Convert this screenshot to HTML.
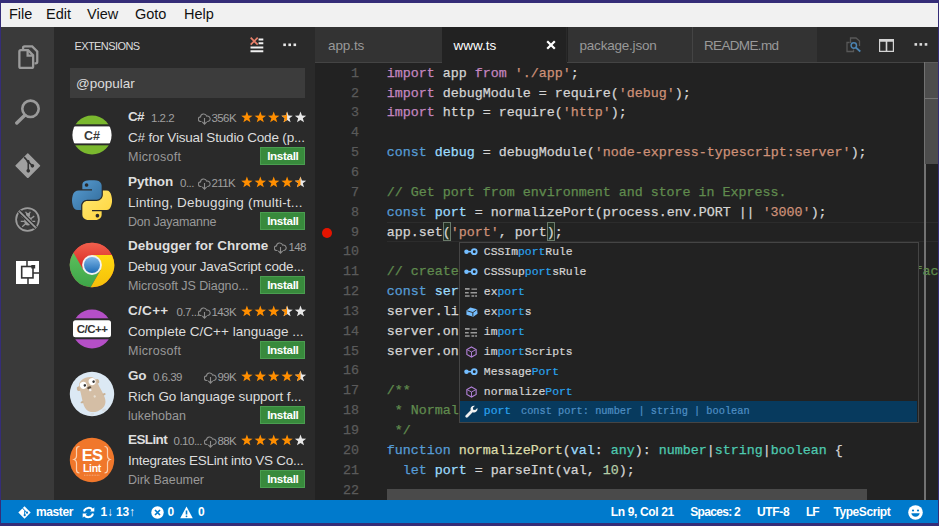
<!DOCTYPE html>
<html lang="en">
<head>
<meta charset="utf-8">
<title>www.ts - Visual Studio Code</title>
<style>
*{box-sizing:border-box;margin:0;padding:0}
html,body{width:939px;height:526px;overflow:hidden;background:#352d78}
body{position:relative;font-family:"Liberation Sans",sans-serif;color:#ccc}
.abs{position:absolute}
#menubar{left:1px;top:3px;width:937px;height:24px;background:#f1f1f1;color:#111;font-size:14.5px}
#menubar span{position:absolute;top:2.300px;line-height:18px;white-space:nowrap}
#activity{left:1px;top:27px;width:53px;height:473px;background:#3a3a3a;z-index:2}
#sidebar{left:53px;top:27px;width:262px;height:473px;background:#2a2a2a;overflow:hidden}
#editor{left:315px;top:27px;width:623px;height:473px;background:#222;overflow:hidden}
#status{left:1px;top:499.500px;width:937px;height:23.500px;background:#007acc;color:#fff;font-size:12px;font-weight:bold}
#status span{position:absolute;top:0;line-height:25px;white-space:nowrap}
/* sidebar */
#sbtitle{left:21.500px;top:11px;font-size:11px;line-height:16px;color:#ddd;letter-spacing:-0.59px}
#search{left:17px;top:41px;width:235px;height:30px;background:#3c3c3c;color:#ddd;font-size:13.5px;line-height:31.500px;padding-left:6px}
.ext{position:absolute;left:0;width:262px;height:65px}
.ext .ic{position:absolute;left:17px;top:18px;width:42px;height:42px}
.ext .t{position:absolute;left:75px;top:4px;font-size:13.5px;font-weight:bold;color:#dedede;line-height:18px;white-space:nowrap;letter-spacing:-0.5px}
.ext .v{position:absolute;top:5px;font-size:11.5px;color:#a0a0a0;line-height:18px;white-space:nowrap;letter-spacing:-0.5px}
.ext .n{position:absolute;top:5px;font-size:11.5px;color:#a0a0a0;line-height:18px;white-space:nowrap;letter-spacing:-0.6px}
.ext .d{position:absolute;left:75px;top:24px;width:178px;font-size:13.5px;color:#ddd;line-height:20px;white-space:nowrap;overflow:hidden;letter-spacing:-0.35px}
.ext .a{position:absolute;left:75px;top:44px;font-size:12.5px;color:#999;line-height:18px;white-space:nowrap}
.ext .b{position:absolute;left:207.200px;top:43.300px;width:45.300px;height:18px;background:#388a3c;border:1px solid #4a9e50;color:#fff;font-size:11.700px;line-height:16px;text-align:center;letter-spacing:-0.350px;font-weight:bold}
.stars{position:absolute;top:7px;height:13px}
/* editor */
.tab{position:absolute;top:0;height:35px;background:#333;color:#999;font-size:13.5px;line-height:37.500px;white-space:nowrap;letter-spacing:-0.4px}
.tab.act{background:#222;color:#fff}
#code{left:0;top:35px;width:623px;height:438px;font-family:"Liberation Mono",monospace;font-size:13.33px;color:#d4d4d4;-webkit-text-stroke:0.25px}
.ln{position:absolute;left:0;width:623px;height:20px;line-height:20px;white-space:pre}
.ln i{position:absolute;left:0;width:44px;text-align:right;color:#5a5a5a;font-style:normal}
.ln b{position:absolute;left:71.700px;font-weight:normal}
.k{color:#c586c0}.s{color:#ce9178}.c{color:#608b4e}.kw{color:#569cd6}.v1{color:#9cdcfe}.f{color:#dcdcaa}.ty{color:#4ec9b0}.nu{color:#b5cea8}
#sug{left:144.300px;top:179.900px;width:459.700px;height:181px;-webkit-text-stroke:0.2px;background:#222;overflow:hidden;border:1px solid #454545;font-family:"Liberation Mono",monospace;font-size:11.400px;color:#d4d4d4}
.sg{position:absolute;left:0;width:457px;height:20px;line-height:20px;white-space:pre}
.sg b{position:absolute;left:23.500px;font-weight:normal}
.sg em{color:#2aa2ee;font-style:normal}
</style>
</head>
<body>
<div id="menubar" class="abs">
<span style="left:8px">File</span><span style="left:45px">Edit</span><span style="left:86px">View</span><span style="left:134px">Goto</span><span style="left:183px">Help</span>
</div>

<div id="activity" class="abs">
<!-- files -->
<svg class="abs" style="left:17px;top:18.300px" width="22" height="24.800" viewBox="0 0 24 27"><path d="M5.500 4.500V3.200q0-1.700 1.700-1.700h8.300l5.500 5.500v11.300q0 1.700-1.700 1.700h-1.300" fill="none" stroke="#9b9b9b" stroke-width="2.500"/><path d="M1.500 7.200q0-1.700 1.700-1.700h7.800l5.500 5.500v12.300q0 1.700-1.700 1.700H3.200q-1.700 0-1.700-1.700z" fill="none" stroke="#9b9b9b" stroke-width="2.500"/><path d="M10.500 5.500v6h6" fill="none" stroke="#9b9b9b" stroke-width="2.500"/></svg>
<!-- search -->
<svg class="abs" style="left:13px;top:71px" width="28" height="27" viewBox="0 0 28 27"><circle cx="16.500" cy="10.800" r="8.200" fill="none" stroke="#9b9b9b" stroke-width="2.600"/><path d="M10.800 17.200L2.800 25" stroke="#9b9b9b" stroke-width="3.400" stroke-linecap="round"/></svg>
<!-- git -->
<svg class="abs" style="left:14.100px;top:125.900px" width="25.600" height="25.600" viewBox="0 0 28 28"><path d="M14 1.200L26.800 14 14 26.800 1.200 14z" fill="#a0a0a0" stroke="#a0a0a0" stroke-width="1.500" stroke-linejoin="round"/><path d="M10 4.500l4.500 5v9.500M14.500 9.500l4.200 4.200" fill="none" stroke="#333" stroke-width="1.700"/><circle cx="14.500" cy="19.500" r="2" fill="#333"/><circle cx="19" cy="14" r="2" fill="#333"/><circle cx="14.300" cy="9.300" r="1.600" fill="#333"/></svg>
<!-- debug -->
<svg class="abs" style="left:13.400px;top:178.800px" width="27" height="27" viewBox="0 0 28 28"><circle cx="14" cy="14" r="11.800" fill="none" stroke="#9b9b9b" stroke-width="1.800"/><ellipse cx="14.500" cy="15.500" rx="4" ry="4.800" fill="#9b9b9b"/><circle cx="14.500" cy="9.300" r="2.200" fill="#9b9b9b"/><path d="M8 10.500l4 3M21 10.500l-4 3M7 16h4M22 16h-4M8.500 21.500l3.500-3M20.500 21.500l-3.500-3M12 6l1.500 2.500M17 6l-1.500 2.500" stroke="#9b9b9b" stroke-width="1.300" fill="none"/><path d="M5.500 5.500L22.500 22.500" stroke="#333" stroke-width="4.200"/><path d="M5.500 5.500L22.500 22.500" stroke="#9b9b9b" stroke-width="1.800"/></svg>
<!-- extensions -->
<svg class="abs" style="left:14.800px;top:233.800px" width="23.400" height="23.400" viewBox="0 0 23.400 23.400"><rect x="0" y="0" width="23.400" height="23.400" fill="#fff"/><rect x="5.700" y="5.500" width="11.300" height="11.400" fill="none" stroke="#333" stroke-width="1.600"/><path d="M11 0v5.500M12 17v6.400M17 12h6.400" stroke="#333" stroke-width="1.500" fill="none"/><rect x="15.300" y="4" width="3.900" height="3.500" fill="#333"/></svg>
</div>

<div id="sidebar" class="abs">
<div id="sbtitle" class="abs">EXTENSIONS</div>
<svg class="abs" style="left:196.500px;top:9.500px" width="14" height="16" viewBox="0 0 14 16"><path d="M8.600 1.400h4.700v2H8.600zM8.600 5.300h4.700v2H8.600zM0.500 9.400h12.800v2H0.500zM0.500 13.300h12.800v2H0.500z" fill="#f0f0f0"/><path d="M0.700 0.700l7 7M7.700 0.700l-7 7" stroke="#e8806a" stroke-width="1.700" fill="none"/></svg>
<svg class="abs" style="left:229.500px;top:16px" width="14" height="4" viewBox="0 0 14 4"><rect x="0.300" y="0.500" width="2.600" height="2.600" fill="#e8e8e8"/><rect x="5.400" y="0.500" width="2.600" height="2.600" fill="#e8e8e8"/><rect x="10.500" y="0.500" width="2.600" height="2.600" fill="#e8e8e8"/></svg>
<div id="search" class="abs">@popular</div>
<div id="extlist" class="abs" style="left:0;top:77px;width:262px;height:400px">
<!--EXT-->
<div class="ext" style="top:-0.3px"><svg class="abs" style="left:19px;top:11.5px" width="40" height="40" viewBox="0 0 40 40"><defs><clipPath id="cc1"><circle cx="20" cy="20" r="19.600"/></clipPath></defs><circle cx="20" cy="20" r="19.600" fill="#7ab82e"/><rect x="0" y="9.300" width="40" height="21" fill="#2a2a2a"/><rect x="0" y="11.400" width="40" height="17" fill="#fff" clip-path="url(#cc1)"/><text x="20" y="24.500" text-anchor="middle" font-family="Liberation Sans, sans-serif" font-weight="bold" font-size="12.500" fill="#3a3a3a">C#</text></svg><div class="t" style="letter-spacing:-0.844px">C#</div><div class="v" style="left:98px">1.2.2</div><svg class="abs" style="left:144.5px;top:9px" width="13" height="12" viewBox="0 0 13 12"><path d="M3.500 8.500h-0.700a2.300 2.300 0 0 1-0.300-4.600 3.200 3.200 0 0 1 6.200-0.800 2.700 2.700 0 0 1 1.300 5.400h-0.800" fill="none" stroke="#8c8c8c" stroke-width="1.100"/><path d="M6.500 5v6M4.300 8.800l2.200 2.400 2.200-2.400" fill="none" stroke="#8c8c8c" stroke-width="1.100"/></svg><div class="n" style="left:158.5px">356K</div><svg class="stars" style="left:187.6px" width="67" height="13" viewBox="0 0 67 13"><polygon points="5.90,0.50 7.34,4.52 11.61,4.65 8.23,7.26 9.43,11.35 5.90,8.95 2.37,11.35 3.57,7.26 0.19,4.65 4.46,4.52" fill="#ff8e00"/><polygon points="19.30,0.50 20.74,4.52 25.01,4.65 21.63,7.26 22.83,11.35 19.30,8.95 15.77,11.35 16.97,7.26 13.59,4.65 17.86,4.52" fill="#ff8e00"/><polygon points="32.70,0.50 34.14,4.52 38.41,4.65 35.03,7.26 36.23,11.35 32.70,8.95 29.17,11.35 30.37,7.26 26.99,4.65 31.26,4.52" fill="#ff8e00"/><polygon points="46.10,0.50 47.54,4.52 51.81,4.65 48.43,7.26 49.63,11.35 46.10,8.95 42.57,11.35 43.77,7.26 40.39,4.65 44.66,4.52" fill="#e8e8e8"/><polygon points="46.10,0.50 44.66,4.52 40.39,4.65 43.77,7.26 42.57,11.35 46.10,8.95" fill="#ff8e00"/><polygon points="59.50,0.50 60.94,4.52 65.21,4.65 61.83,7.26 63.03,11.35 59.50,8.95 55.97,11.35 57.17,7.26 53.79,4.65 58.06,4.52" fill="#e8e8e8"/></svg><div class="d" style="letter-spacing:-0.174px">C# for Visual Studio Code (p...</div><div class="a" style="letter-spacing:0.294px">Microsoft</div><div class="b">Install</div></div>
<div class="ext" style="top:64.7px"><svg class="abs" style="left:19px;top:11.6px" width="40" height="40" viewBox="0 0 111 110"><defs><linearGradient id="pyb" x1="0" y1="0" x2="1" y2="1"><stop offset="0" stop-color="#5a9fd4"/><stop offset="1" stop-color="#306998"/></linearGradient><linearGradient id="pyy" x1="0" y1="0" x2="1" y2="1"><stop offset="0" stop-color="#ffe873"/><stop offset="1" stop-color="#ffd43b"/></linearGradient></defs><path fill="url(#pyb)" d="M54.919 0.001c-4.584 0.021-8.961 0.412-12.813 1.094-11.346 2.005-13.406 6.200-13.406 13.938v10.219h26.813v3.406h-26.813-10.063c-7.792 0-14.616 4.684-16.750 13.594-2.462 10.213-2.571 16.586 0 27.250 1.906 7.938 6.458 13.594 14.250 13.594h9.219v-12.250c0-8.850 7.657-16.656 16.750-16.656h26.781c7.455 0 13.406-6.138 13.406-13.625v-25.531c0-7.266-6.130-12.725-13.406-13.938-4.606-0.767-9.385-1.115-13.969-1.094zm-14.500 8.219c2.770 0 5.031 2.299 5.031 5.125 0 2.816-2.262 5.094-5.031 5.094-2.779 0-5.031-2.278-5.031-5.094 0-2.826 2.252-5.125 5.031-5.125z"/><path fill="url(#pyy)" d="M85.638 28.657v11.906c0 9.231-7.826 17-16.750 17h-26.781c-7.336 0-13.406 6.279-13.406 13.625v25.531c0 7.266 6.319 11.540 13.406 13.625 8.487 2.496 16.626 2.947 26.781 0 6.750-1.954 13.406-5.888 13.406-13.625v-10.219h-26.781v-3.406h26.781 13.406c7.792 0 10.696-5.435 13.406-13.594 2.799-8.399 2.680-16.476 0-27.250-1.926-7.757-5.604-13.594-13.406-13.594zm-15.063 64.656c2.779 0 5.031 2.277 5.031 5.094 0 2.826-2.252 5.125-5.031 5.125-2.770 0-5.031-2.299-5.031-5.125 0-2.816 2.262-5.094 5.031-5.094z"/></svg><div class="t" style="letter-spacing:-0.118px">Python</div><div class="v" style="left:127px">0...</div><svg class="abs" style="left:144.5px;top:9px" width="13" height="12" viewBox="0 0 13 12"><path d="M3.500 8.500h-0.700a2.300 2.300 0 0 1-0.300-4.600 3.200 3.200 0 0 1 6.200-0.800 2.700 2.700 0 0 1 1.300 5.400h-0.800" fill="none" stroke="#8c8c8c" stroke-width="1.100"/><path d="M6.500 5v6M4.300 8.800l2.200 2.400 2.200-2.400" fill="none" stroke="#8c8c8c" stroke-width="1.100"/></svg><div class="n" style="left:158.5px">211K</div><svg class="stars" style="left:187.6px" width="67" height="13" viewBox="0 0 67 13"><polygon points="5.90,0.50 7.34,4.52 11.61,4.65 8.23,7.26 9.43,11.35 5.90,8.95 2.37,11.35 3.57,7.26 0.19,4.65 4.46,4.52" fill="#ff8e00"/><polygon points="19.30,0.50 20.74,4.52 25.01,4.65 21.63,7.26 22.83,11.35 19.30,8.95 15.77,11.35 16.97,7.26 13.59,4.65 17.86,4.52" fill="#ff8e00"/><polygon points="32.70,0.50 34.14,4.52 38.41,4.65 35.03,7.26 36.23,11.35 32.70,8.95 29.17,11.35 30.37,7.26 26.99,4.65 31.26,4.52" fill="#ff8e00"/><polygon points="46.10,0.50 47.54,4.52 51.81,4.65 48.43,7.26 49.63,11.35 46.10,8.95 42.57,11.35 43.77,7.26 40.39,4.65 44.66,4.52" fill="#ff8e00"/><polygon points="59.50,0.50 60.94,4.52 65.21,4.65 61.83,7.26 63.03,11.35 59.50,8.95 55.97,11.35 57.17,7.26 53.79,4.65 58.06,4.52" fill="#e8e8e8"/><polygon points="59.50,0.50 58.06,4.52 53.79,4.65 57.17,7.26 55.97,11.35 59.50,8.95" fill="#ff8e00"/></svg><div class="d" style="letter-spacing:0.192px">Linting, Debugging (multi-t...</div><div class="a" style="letter-spacing:-0.218px">Don Jayamanne</div><div class="b">Install</div></div>
<div class="ext" style="top:128.7px"><svg class="abs" style="left:16px;top:9.6px" width="46" height="46" viewBox="0 0 46 46"><defs><linearGradient id="chr" x1="0" y1="0" x2="0" y2="1"><stop offset="0" stop-color="#f0604d"/><stop offset="1" stop-color="#d8231f"/></linearGradient><linearGradient id="chb" x1="0" y1="0" x2="0" y2="1"><stop offset="0" stop-color="#7fb6e6"/><stop offset="1" stop-color="#1d6bb5"/></linearGradient><linearGradient id="chg" x1="0" y1="0" x2="0" y2="1"><stop offset="0" stop-color="#5cbf5c"/><stop offset="1" stop-color="#3da548"/></linearGradient><linearGradient id="chy" x1="0" y1="0" x2="0" y2="1"><stop offset="0" stop-color="#ffd90f"/><stop offset="1" stop-color="#f5bf0b"/></linearGradient></defs><circle cx="23" cy="23" r="22.2" fill="#e33"/><path d="M4.49 10.74A22.2 22.2 0 0 1 42.87 13.10L23.00 13.10L14.43 27.95Z" fill="url(#chr)"/><path d="M42.87 13.10A22.2 22.2 0 0 1 21.64 45.16L31.57 27.95L23.00 13.10Z" fill="url(#chy)"/><path d="M21.64 45.16A22.2 22.2 0 0 1 4.49 10.74L14.43 27.95L31.57 27.95Z" fill="url(#chg)"/><circle cx="23" cy="23" r="9.9" fill="#f2f2f2"/><circle cx="23" cy="23" r="8" fill="url(#chb)"/></svg><div class="t" style="letter-spacing:0.048px">Debugger for Chrome</div><svg class="abs" style="left:220.5px;top:9px" width="13" height="12" viewBox="0 0 13 12"><path d="M3.500 8.500h-0.700a2.300 2.300 0 0 1-0.300-4.600 3.200 3.200 0 0 1 6.200-0.800 2.700 2.700 0 0 1 1.300 5.400h-0.800" fill="none" stroke="#8c8c8c" stroke-width="1.100"/><path d="M6.500 5v6M4.300 8.800l2.200 2.400 2.200-2.400" fill="none" stroke="#8c8c8c" stroke-width="1.100"/></svg><div class="n" style="left:235.5px">148</div><div class="d" style="letter-spacing:-0.16px">Debug your JavaScript code...</div><div class="a" style="letter-spacing:-0.082px">Microsoft JS Diagno...</div><div class="b">Install</div></div>
<div class="ext" style="top:193.7px"><svg class="abs" style="left:19px;top:11.7px" width="40" height="40" viewBox="0 0 40 40"><circle cx="20" cy="20" r="19.600" fill="#b54fc7"/><rect x="0" y="9.300" width="40" height="21" fill="#2a2a2a"/><rect x="1" y="11.300" width="38" height="17" rx="2.500" fill="#fff"/><text x="20" y="24.200" text-anchor="middle" font-family="Liberation Sans, sans-serif" font-weight="bold" font-size="11.500" letter-spacing="-0.5" fill="#333">C/C++</text></svg><div class="t" style="letter-spacing:0.304px">C/C++</div><div class="v" style="left:123.5px">0.7...</div><svg class="abs" style="left:144.5px;top:9px" width="13" height="12" viewBox="0 0 13 12"><path d="M3.500 8.500h-0.700a2.300 2.300 0 0 1-0.300-4.600 3.200 3.200 0 0 1 6.200-0.800 2.700 2.700 0 0 1 1.300 5.400h-0.800" fill="none" stroke="#8c8c8c" stroke-width="1.100"/><path d="M6.500 5v6M4.300 8.800l2.200 2.400 2.200-2.400" fill="none" stroke="#8c8c8c" stroke-width="1.100"/></svg><div class="n" style="left:158.5px">143K</div><svg class="stars" style="left:187.6px" width="67" height="13" viewBox="0 0 67 13"><polygon points="5.90,0.50 7.34,4.52 11.61,4.65 8.23,7.26 9.43,11.35 5.90,8.95 2.37,11.35 3.57,7.26 0.19,4.65 4.46,4.52" fill="#ff8e00"/><polygon points="19.30,0.50 20.74,4.52 25.01,4.65 21.63,7.26 22.83,11.35 19.30,8.95 15.77,11.35 16.97,7.26 13.59,4.65 17.86,4.52" fill="#ff8e00"/><polygon points="32.70,0.50 34.14,4.52 38.41,4.65 35.03,7.26 36.23,11.35 32.70,8.95 29.17,11.35 30.37,7.26 26.99,4.65 31.26,4.52" fill="#ff8e00"/><polygon points="46.10,0.50 47.54,4.52 51.81,4.65 48.43,7.26 49.63,11.35 46.10,8.95 42.57,11.35 43.77,7.26 40.39,4.65 44.66,4.52" fill="#e8e8e8"/><polygon points="46.10,0.50 44.66,4.52 40.39,4.65 43.77,7.26 42.57,11.35 46.10,8.95" fill="#ff8e00"/><polygon points="59.50,0.50 60.94,4.52 65.21,4.65 61.83,7.26 63.03,11.35 59.50,8.95 55.97,11.35 57.17,7.26 53.79,4.65 58.06,4.52" fill="#e8e8e8"/></svg><div class="d" style="letter-spacing:0.028px">Complete C/C++ language ...</div><div class="a" style="letter-spacing:0.294px">Microsoft</div><div class="b">Install</div></div>
<div class="ext" style="top:258.7px"><svg class="abs" style="left:16px;top:8.8px" width="46" height="46" viewBox="0 0 46 46"><circle cx="23" cy="23" r="22.200" fill="#dce9f4"/><g transform="translate(0 1.200) rotate(-20 23 23) translate(23 23) scale(1.06) translate(-23 -23)"><ellipse cx="13.500" cy="13" rx="2" ry="2.200" fill="#c9b296"/><ellipse cx="32" cy="12.500" rx="2" ry="2.200" fill="#c9b296"/><path d="M14 14c0-6 4-8.500 9-8.500s9 2.500 9 8.500c0 5 1.500 9 1.500 15 0 7-4.500 10-10.500 10s-10.500-3-10.500-10c0-6 1.500-10 1.500-15z" fill="#d4bea5"/><ellipse cx="12" cy="26" rx="1.500" ry="1" fill="#c9b296"/><ellipse cx="34" cy="26" rx="1.500" ry="1" fill="#c9b296"/><ellipse cx="17" cy="40" rx="2" ry="1.200" fill="#d8dde2"/><ellipse cx="29" cy="40" rx="2" ry="1.200" fill="#d8dde2"/><circle cx="18.500" cy="11.500" r="3.300" fill="#fff"/><circle cx="27.500" cy="11" r="3.300" fill="#fff"/><circle cx="19.800" cy="12" r="1.200" fill="#333"/><circle cx="28.800" cy="11.500" r="1.200" fill="#333"/><ellipse cx="23" cy="15.500" rx="2" ry="1.300" fill="#5a4a3a"/><rect x="22" y="16.500" width="2.200" height="2.500" rx="0.800" fill="#f4f4f4"/><circle cx="25" cy="25" r="1.100" fill="#e8e0d4"/></g></svg><div class="t" style="letter-spacing:-0.367px">Go</div><div class="v" style="left:100px">0.6.39</div><svg class="abs" style="left:150.5px;top:9px" width="13" height="12" viewBox="0 0 13 12"><path d="M3.500 8.500h-0.700a2.300 2.300 0 0 1-0.300-4.600 3.200 3.200 0 0 1 6.200-0.800 2.700 2.700 0 0 1 1.300 5.400h-0.800" fill="none" stroke="#8c8c8c" stroke-width="1.100"/><path d="M6.500 5v6M4.300 8.800l2.200 2.400 2.200-2.400" fill="none" stroke="#8c8c8c" stroke-width="1.100"/></svg><div class="n" style="left:164.5px">99K</div><svg class="stars" style="left:187.6px" width="67" height="13" viewBox="0 0 67 13"><polygon points="5.90,0.50 7.34,4.52 11.61,4.65 8.23,7.26 9.43,11.35 5.90,8.95 2.37,11.35 3.57,7.26 0.19,4.65 4.46,4.52" fill="#ff8e00"/><polygon points="19.30,0.50 20.74,4.52 25.01,4.65 21.63,7.26 22.83,11.35 19.30,8.95 15.77,11.35 16.97,7.26 13.59,4.65 17.86,4.52" fill="#ff8e00"/><polygon points="32.70,0.50 34.14,4.52 38.41,4.65 35.03,7.26 36.23,11.35 32.70,8.95 29.17,11.35 30.37,7.26 26.99,4.65 31.26,4.52" fill="#ff8e00"/><polygon points="46.10,0.50 47.54,4.52 51.81,4.65 48.43,7.26 49.63,11.35 46.10,8.95 42.57,11.35 43.77,7.26 40.39,4.65 44.66,4.52" fill="#ff8e00"/><polygon points="59.50,0.50 60.94,4.52 65.21,4.65 61.83,7.26 63.03,11.35 59.50,8.95 55.97,11.35 57.17,7.26 53.79,4.65 58.06,4.52" fill="#e8e8e8"/><polygon points="59.50,0.50 58.06,4.52 53.79,4.65 57.17,7.26 55.97,11.35 59.50,8.95" fill="#ff8e00"/></svg><div class="d" style="letter-spacing:-0.074px">Rich Go language support f...</div><div class="a" style="letter-spacing:0.047px">lukehoban</div><div class="b">Install</div></div>
<div class="ext" style="top:322.7px"><svg class="abs" style="left:16px;top:9.9px" width="46" height="46" viewBox="0 0 46 46"><circle cx="23" cy="23" r="22.200" fill="#f0772b"/><text x="23" y="23.500" text-anchor="middle" font-family="Liberation Sans, sans-serif" font-weight="bold" font-size="16.500" letter-spacing="-0.8" fill="#fff">ES</text><text x="23" y="35" text-anchor="middle" font-family="Liberation Sans, sans-serif" font-weight="bold" font-size="10.500" letter-spacing="-0.3" fill="#fff">Lint</text><path d="M15 38.200h16" stroke="#f8b890" stroke-width="0.800" stroke-dasharray="1 0.600"/><path d="M10.500 9.500c-2.500 0-3 1-3 3v6.500c0 2-1 3-2.500 3.500 1.500 0.500 2.500 1.500 2.500 3.500v7c0 2 0.500 3 3 3M35.500 9.500c2.500 0 3 1 3 3v6.500c0 2 1 3 2.500 3.500-1.500 0.500-2.500 1.500-2.500 3.500v7c0 2-0.500 3-3 3" fill="none" stroke="#fbd0b0" stroke-width="1.200"/></svg><div class="t" style="letter-spacing:-0.609px">ESLint</div><div class="v" style="left:120.5px">0.10...</div><svg class="abs" style="left:150.5px;top:9px" width="13" height="12" viewBox="0 0 13 12"><path d="M3.500 8.500h-0.700a2.300 2.300 0 0 1-0.300-4.600 3.200 3.200 0 0 1 6.200-0.800 2.700 2.700 0 0 1 1.300 5.400h-0.800" fill="none" stroke="#8c8c8c" stroke-width="1.100"/><path d="M6.500 5v6M4.300 8.800l2.200 2.400 2.200-2.400" fill="none" stroke="#8c8c8c" stroke-width="1.100"/></svg><div class="n" style="left:164.5px">88K</div><svg class="stars" style="left:187.6px" width="67" height="13" viewBox="0 0 67 13"><polygon points="5.90,0.50 7.34,4.52 11.61,4.65 8.23,7.26 9.43,11.35 5.90,8.95 2.37,11.35 3.57,7.26 0.19,4.65 4.46,4.52" fill="#ff8e00"/><polygon points="19.30,0.50 20.74,4.52 25.01,4.65 21.63,7.26 22.83,11.35 19.30,8.95 15.77,11.35 16.97,7.26 13.59,4.65 17.86,4.52" fill="#ff8e00"/><polygon points="32.70,0.50 34.14,4.52 38.41,4.65 35.03,7.26 36.23,11.35 32.70,8.95 29.17,11.35 30.37,7.26 26.99,4.65 31.26,4.52" fill="#ff8e00"/><polygon points="46.10,0.50 47.54,4.52 51.81,4.65 48.43,7.26 49.63,11.35 46.10,8.95 42.57,11.35 43.77,7.26 40.39,4.65 44.66,4.52" fill="#ff8e00"/><polygon points="59.50,0.50 60.94,4.52 65.21,4.65 61.83,7.26 63.03,11.35 59.50,8.95 55.97,11.35 57.17,7.26 53.79,4.65 58.06,4.52" fill="#e8e8e8"/></svg><div class="d" style="letter-spacing:-0.246px">Integrates ESLint into VS Co...</div><div class="a" style="letter-spacing:-0.037px">Dirk Baeumer</div><div class="b">Install</div></div>
<!--/EXT-->
</div>
</div>

<div id="editor" class="abs">
<div id="tabs" class="abs" style="left:0;top:0;width:623px;height:35px;background:#2a2a2a">
<div class="tab" style="left:0;width:126.5px;padding-left:13px;letter-spacing:-0.09px">app.ts</div>
<div class="tab act" style="left:126.5px;width:124px;padding-left:12px;letter-spacing:0">www.ts<svg class="abs" style="left:104px;top:13px" width="10" height="10" viewBox="0 0 10 10"><path d="M1.2 1.2L8.8 8.8M8.8 1.2L1.2 8.8" stroke="#fff" stroke-width="2.2" fill="none"/></svg></div>
<div class="tab" style="left:251.5px;width:125px;padding-left:12px;border-left:1px solid #222;letter-spacing:-0.21px">package.json</div>
<div class="tab" style="left:377px;width:124.5px;padding-left:11px;border-left:1px solid #444;letter-spacing:-0.66px">README.md</div>
<div class="abs" style="left:0;top:34.5px;width:126.5px;height:1px;background:#444"></div>
<div class="abs" style="left:251.5px;top:34.5px;width:371.5px;height:1px;background:#444"></div>
<!-- editor actions -->
<svg class="abs" style="left:530.500px;top:10px" width="17" height="16" viewBox="0 0 17 16"><path d="M3.500 5.500H1v9h6.500v-2M4.500 6V1h5.500l3.500 3v5" stroke="#585858" stroke-width="1.300" fill="none"/><circle cx="7.800" cy="8.500" r="2.700" stroke="#4c83b0" stroke-width="1.500" fill="none"/><path d="M9.800 10.500l4.500 4" stroke="#4c83b0" stroke-width="1.700"/></svg>
<svg class="abs" style="left:564px;top:11.600px" width="15" height="13" viewBox="0 0 15 13"><path d="M0 0h15v13H0zM1.200 2.800v9h5.500v-9zM8.300 2.800v9h5.500v-9z" fill="#d4d4d4" fill-rule="evenodd"/></svg>
<svg class="abs" style="left:598.500px;top:16px" width="14" height="3" viewBox="0 0 14 3"><rect x="0.500" y="0.100" width="2.600" height="2.600" fill="#dcdcdc"/><rect x="5.500" y="0.100" width="2.600" height="2.600" fill="#dcdcdc"/><rect x="10.700" y="0.100" width="2.600" height="2.600" fill="#dcdcdc"/></svg>
</div>
<div id="code" class="abs">
<div class="abs" style="left:72px;top:159.500px;width:551px;height:20.500px;border:1px solid #2c2c2c;border-left:0;border-right:0"></div>
<div class="abs" style="left:72px;top:427px;width:480px;height:11px;background:#4a4a4a"></div>
<div class="abs" style="left:609px;top:0;width:1.800px;height:438px;background:#727272"></div>
<div class="abs" style="left:610.200px;top:0.500px;width:13px;height:101px;background:#4d4d4d"></div>
<div class="abs" style="left:610.200px;top:35.500px;width:13px;height:1px;background:#747474"></div>
<div class="abs" style="left:610.200px;top:0px;width:13px;height:1px;background:#5e5e5e"></div>
<div class="abs" style="left:127.500px;top:159.500px;width:8px;height:19px;border:1px solid #6a7a6a;background:#233023"></div>
<div class="abs" style="left:231.500px;top:159.500px;width:8px;height:19px;border:1px solid #6a7a6a;background:#233023"></div>
<div class="abs" style="left:6.500px;top:165.500px;width:10px;height:10px;border-radius:50%;background:#e51400"></div>
<!--CODE-->
<div class="ln" style="top:1.7px"><i>1</i><b><span class="k">import</span> app <span class="k">from</span> <span class="s">'./app'</span>;</b></div>
<div class="ln" style="top:21.55px"><i>2</i><b><span class="k">import</span> debugModule = require(<span class="s">'debug'</span>);</b></div>
<div class="ln" style="top:41.4px"><i>3</i><b><span class="k">import</span> http = require(<span class="s">'http'</span>);</b></div>
<div class="ln" style="top:61.25px"><i>4</i><b></b></div>
<div class="ln" style="top:81.1px"><i>5</i><b><span class="kw">const</span> <span class="v1">debug</span> = debugModule(<span class="s">'node-express-typescript:server'</span>);</b></div>
<div class="ln" style="top:100.95px"><i>6</i><b></b></div>
<div class="ln" style="top:120.8px"><i>7</i><b><span class="c">// Get port from environment and store in Express.</span></b></div>
<div class="ln" style="top:140.65px"><i>8</i><b><span class="kw">const</span> <span class="v1">port</span> = normalizePort(process.env.PORT || <span class="s">'3000'</span>);</b></div>
<div class="ln" style="top:160.5px"><i>9</i><b>app.set(<span class="s">'port'</span>, port);</b></div>
<div class="ln" style="top:180.35px"><i>10</i><b></b></div>
<div class="ln" style="top:200.2px"><i>11</i><b><span class="c">// create server and listen on provided port (on all network interfaces).Fac</span></b></div>
<div class="ln" style="top:220.05px"><i>12</i><b><span class="kw">const</span> <span class="v1">server</span> = http.createServer(app);</b></div>
<div class="ln" style="top:239.9px"><i>13</i><b>server.listen(port);</b></div>
<div class="ln" style="top:259.75px"><i>14</i><b>server.on(<span class="s">'error'</span>, onError);</b></div>
<div class="ln" style="top:279.6px"><i>15</i><b>server.on(<span class="s">'listening'</span>, onListening);</b></div>
<div class="ln" style="top:299.45px"><i>16</i><b></b></div>
<div class="ln" style="top:319.3px"><i>17</i><b><span class="c">/**</span></b></div>
<div class="ln" style="top:339.15px"><i>18</i><b><span class="c"> * Normalize a port into a number, string, or false.</span></b></div>
<div class="ln" style="top:359.0px"><i>19</i><b><span class="c"> */</span></b></div>
<div class="ln" style="top:378.85px"><i>20</i><b><span class="kw">function</span> <span class="f">normalizePort</span>(<span class="v1">val</span>: <span class="ty">any</span>): <span class="ty">number</span>|<span class="ty">string</span>|<span class="ty">boolean</span> {</b></div>
<div class="ln" style="top:398.7px"><i>21</i><b>  <span class="kw">let</span> <span class="v1">port</span> = parseInt(val, <span class="nu">10</span>);</b></div>
<div class="ln" style="top:418.55px"><i>22</i><b></b></div>
<!--/CODE-->
<div id="sug" class="abs">
<div class="sg" style="top:-1.1px"><svg class="abs" style="left:4px;top:5.300px" width="14" height="9.300" viewBox="0 0 15 10"><circle cx="2.6" cy="5" r="2.4" fill="#75beff"/><path d="M4 5h5" stroke="#75beff" stroke-width="1.6"/><circle cx="11" cy="5" r="2.6" fill="none" stroke="#75beff" stroke-width="2"/></svg><b>CSSIm<em>port</em>Rule</b></div>
<div class="sg" style="top:18.9px"><svg class="abs" style="left:4px;top:5.300px" width="14" height="9.300" viewBox="0 0 15 10"><circle cx="2.6" cy="5" r="2.4" fill="#75beff"/><path d="M4 5h5" stroke="#75beff" stroke-width="1.6"/><circle cx="11" cy="5" r="2.6" fill="none" stroke="#75beff" stroke-width="2"/></svg><b>CSSSup<em>port</em>sRule</b></div>
<div class="sg" style="top:38.9px"><svg class="abs" style="left:5px;top:5px" width="12" height="10.200" viewBox="0 0 13 11"><path d="M0 1h5v2H0zM7 1.5h6v1.5H7zM0 5.5h4v1.5H0zM6 5.5h7v1.5H6zM0 9h5v1.5H0zM7 9h3v1.5H7zM11 9h2v1.5h-2z" fill="#9a9a9a"/></svg><b>ex<em>port</em></b></div>
<div class="sg" style="top:58.9px"><svg class="abs" style="left:6px;top:5px" width="12" height="10.300" viewBox="0 0 14 12"><path d="M5 0.5L13 2.5 13.5 8 8.5 11.5 0.5 9 0.5 4z" fill="#75beff"/><path d="M1.5 4.5L8 6.5 12.5 3.2" stroke="#2a2a2a" stroke-width="1.1" fill="none"/><path d="M8 6.5v4.2" stroke="#2a2a2a" stroke-width="1.1"/></svg><b>ex<em>port</em>s</b></div>
<div class="sg" style="top:78.9px"><svg class="abs" style="left:5px;top:5px" width="12" height="10.200" viewBox="0 0 13 11"><path d="M0 1h5v2H0zM7 1.5h6v1.5H7zM0 5.5h4v1.5H0zM6 5.5h7v1.5H6zM0 9h5v1.5H0zM7 9h3v1.5H7zM11 9h2v1.5h-2z" fill="#9a9a9a"/></svg><b>im<em>port</em></b></div>
<div class="sg" style="top:98.9px"><svg class="abs" style="left:5.500px;top:4px" width="11" height="12" viewBox="0 0 13 14"><path d="M6.5 1L12 4v6l-5.500 3L1 10V4z" fill="none" stroke="#b180d7" stroke-width="1.3"/><path d="M1.300 4.200L6.500 7 11.700 4.200M6.500 7v5.800" fill="none" stroke="#b180d7" stroke-width="1.1"/></svg><b>im<em>port</em>Scripts</b></div>
<div class="sg" style="top:118.9px"><svg class="abs" style="left:4px;top:5.300px" width="14" height="9.300" viewBox="0 0 15 10"><circle cx="2.6" cy="5" r="2.4" fill="#75beff"/><path d="M4 5h5" stroke="#75beff" stroke-width="1.6"/><circle cx="11" cy="5" r="2.6" fill="none" stroke="#75beff" stroke-width="2"/></svg><b>Message<em>Port</em></b></div>
<div class="sg" style="top:138.9px"><svg class="abs" style="left:5.500px;top:4px" width="11" height="12" viewBox="0 0 13 14"><path d="M6.5 1L12 4v6l-5.500 3L1 10V4z" fill="none" stroke="#b180d7" stroke-width="1.3"/><path d="M1.300 4.200L6.500 7 11.700 4.200M6.500 7v5.800" fill="none" stroke="#b180d7" stroke-width="1.1"/></svg><b>normalize<em>Port</em></b></div>
<div class="sg" style="top:158.500px;height:20.500px;line-height:21px;background:#073a5e"><svg class="abs" style="left:4.500px;top:4px" width="13" height="13" viewBox="0 0 15 15"><path d="M10.500 0.800a4 4 0 0 0-3.900 5.300L0.900 11.800a1.500 1.500 0 0 0 2.300 2.300L8.900 8.400a4 4 0 0 0 5.300-4.900L11.800 5.900 9.500 5.500 9.100 3.200 11.500 0.900a4 4 0 0 0-1-0.100z" fill="#f0f0f0"/></svg><b><em>port</em> <span style="font-size:10.3px;color:#4f8fc4;position:relative;left:3px">const port: number | string | boolean</span></b></div>
</div>
</div>
</div>

<div id="status" class="abs">
<svg class="abs" style="left:17px;top:6px" width="13" height="13" viewBox="0 0 13 13"><path d="M6.500 0.300L12.700 6.500 6.500 12.700 0.300 6.500z" fill="#fff"/><path d="M4.500 2l2.200 2.500v4.500M6.700 4.500l2.100 2.100" fill="none" stroke="#007acc" stroke-width="1"/><circle cx="6.700" cy="9.200" r="1.100" fill="#007acc"/><circle cx="9" cy="6.700" r="1.100" fill="#007acc"/></svg>
<span style="left:35px;letter-spacing:-0.39px">master</span>
<svg class="abs" style="left:81px;top:6px" width="13" height="13" viewBox="0 0 13 13"><path d="M10.800 4.500A4.700 4.700 0 0 0 2 5.500M2.200 8.500a4.700 4.700 0 0 0 8.800-1" fill="none" stroke="#fff" stroke-width="2"/><path d="M12.300 1.200v4.300H8zM0.700 11.800V7.500H5z" fill="#fff"/></svg>
<span style="left:99.500px;letter-spacing:-0.15px">1↓ 13↑</span>
<svg class="abs" style="left:150px;top:6px" width="13" height="13" viewBox="0 0 13 13"><circle cx="6.500" cy="6.500" r="6.200" fill="#fff"/><path d="M4 4l5 5M9 4l-5 5" stroke="#007acc" stroke-width="1.700"/></svg>
<span style="left:166.500px">0</span>
<svg class="abs" style="left:179px;top:6px" width="13" height="13" viewBox="0 0 13 13"><path d="M6.500 0.500L12.800 12.300H0.200z" fill="#fff"/><path d="M6.500 4.500v4" stroke="#007acc" stroke-width="1.600"/><circle cx="6.500" cy="10.300" r="0.900" fill="#007acc"/></svg>
<span style="left:197px">0</span>
<span style="left:609.700px;letter-spacing:-0.35px">Ln 9, Col 21</span>
<span style="left:689.200px;letter-spacing:-0.68px">Spaces: 2</span>
<span style="left:756px;letter-spacing:-0.33px">UTF-8</span>
<span style="left:805px;letter-spacing:-1.2px">LF</span>
<span style="left:832.400px;letter-spacing:-0.42px">TypeScript</span>
<svg class="abs" style="left:906.500px;top:5px" width="15" height="15" viewBox="0 0 15 15"><circle cx="7.500" cy="7.500" r="7.300" fill="#fff"/><circle cx="5" cy="5.500" r="1.100" fill="#007acc"/><circle cx="10" cy="5.500" r="1.100" fill="#007acc"/><path d="M3.300 8.300a4.300 4.300 0 0 0 8.400 0z" fill="#007acc"/></svg>
</div>
</body>
</html>
